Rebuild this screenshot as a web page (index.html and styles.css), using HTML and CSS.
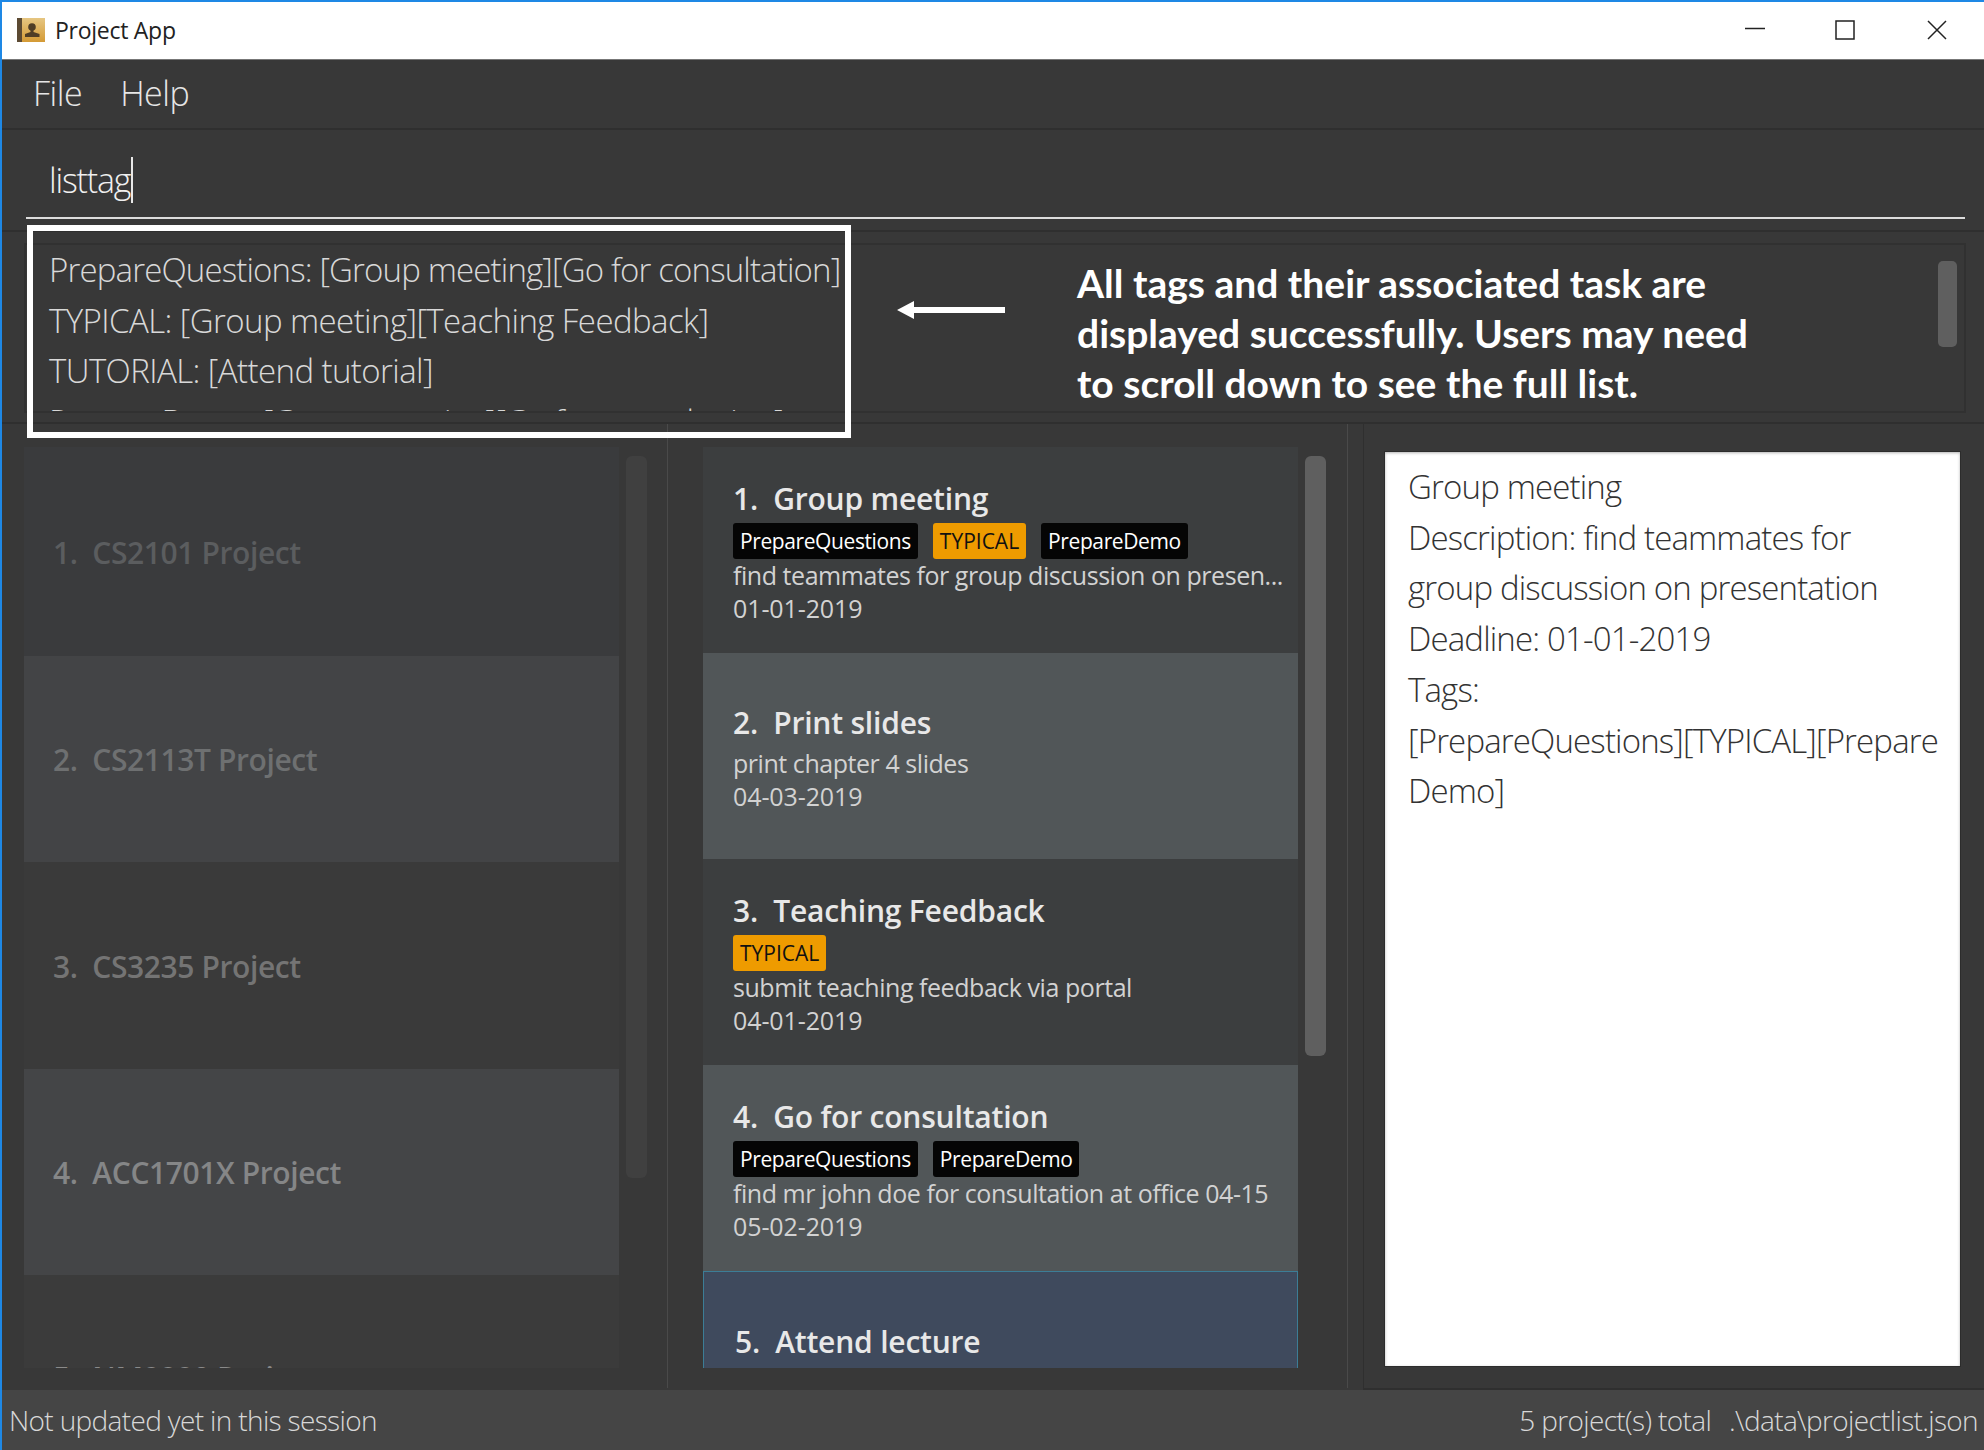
FILE: index.html
```html
<!DOCTYPE html>
<html lang="en">

<head>
    <meta charset="UTF-8">
    <meta name="viewport" content="width=device-width, initial-scale=1.0">
    <title>Project App</title>
    <link rel="stylesheet" href="styles.css">
</head>

<body>
    <div class="window">
        <div class="titlebar">
            <svg class="app-icon" width="28" height="24" viewBox="0 0 28 24">
                <defs>
                    <linearGradient id="cover" x1="0" y1="0" x2="0" y2="1">
                        <stop offset="0" stop-color="#e6c682" />
                        <stop offset="1" stop-color="#d49a35" />
                    </linearGradient>
                </defs>
                <rect width="28" height="24" fill="url(#cover)" />
                <rect width="5" height="24" fill="#5c4a33" />
                <circle cx="15" cy="9" r="3.8" fill="#4f3d26" />
                <path d="M13.5 11h3v3l6 2v3H8v-3l5.500-2z" fill="#4f3d26" />
            </svg>
            <span class="app-title">Project App</span>
            <div class="window-controls">
                <svg width="20" height="20" viewBox="0 0 20 20">
                    <path d="M0 8.500h20" stroke="#222" stroke-width="1.500" />
                </svg>
                <svg class="maximize" width="20" height="20" viewBox="0 0 20 20">
                    <rect x="1" y="1" width="18" height="18" fill="none" stroke="#222" stroke-width="1.500" />
                </svg>
                <svg width="20" height="20" viewBox="0 0 20 20">
                    <path d="M1 1l18 18M19 1L1 19" stroke="#222" stroke-width="1.500" />
                </svg>
            </div>
        </div>

        <div class="menubar">
            <span>File</span>
            <span>Help</span>
        </div>

        <div class="command-bar">
            <div class="command-input"><span class="command-text">listtag</span></div>
        </div>

        <div class="result-bar">
            <div class="result-box">
                <div class="result-text">
                    <div class="result-long">PrepareQuestions: [Group meeting][Go for consultation]</div>
                    <div>TYPICAL: [Group meeting][Teaching Feedback]</div>
                    <div>TUTORIAL: [Attend tutorial]</div>
                    <div class="result-long">PrepareDemo: [Group meeting][Go for consultation]</div>
                </div>
                <div class="result-thumb"></div>
            </div>
        </div>

        <div class="main">
            <div class="column project-column">
                <div class="list">
                    <div class="project-card fade-1">1.&nbsp; CS2101 Project</div>
                    <div class="project-card fade-2">2.&nbsp; CS2113T Project</div>
                    <div class="project-card fade-3">3.&nbsp; CS3235 Project</div>
                    <div class="project-card fade-4">4.&nbsp; ACC1701X Project</div>
                    <div class="project-card fade-5">5.&nbsp; NM2220 Project</div>
                </div>
                <div class="scrollbar faded"></div>
            </div>

            <div class="column task-column">
                <div class="list">
                    <div class="task-card">
                        <div class="task-name">1.&nbsp; Group meeting</div>
                        <div class="tags">
                            <span class="tag">PrepareQuestions</span>
                            <span class="tag typical">TYPICAL</span>
                            <span class="tag">PrepareDemo</span>
                        </div>
                        <div class="task-line">find teammates for group discussion on presen...</div>
                        <div class="task-line task-date">01-01-2019</div>
                    </div>
                    <div class="task-card alt">
                        <div class="task-name">2.&nbsp; Print slides</div>
                        <div class="task-line">print chapter 4 slides</div>
                        <div class="task-line task-date">04-03-2019</div>
                    </div>
                    <div class="task-card">
                        <div class="task-name">3.&nbsp; Teaching Feedback</div>
                        <div class="tags">
                            <span class="tag typical">TYPICAL</span>
                        </div>
                        <div class="task-line">submit teaching feedback via portal</div>
                        <div class="task-line task-date">04-01-2019</div>
                    </div>
                    <div class="task-card alt">
                        <div class="task-name">4.&nbsp; Go for consultation</div>
                        <div class="tags">
                            <span class="tag">PrepareQuestions</span>
                            <span class="tag">PrepareDemo</span>
                        </div>
                        <div class="task-line">find mr john doe for consultation at office 04-15</div>
                        <div class="task-line task-date">05-02-2019</div>
                    </div>
                    <div class="task-card selected">
                        <div class="task-name">5.&nbsp; Attend lecture</div>
                    </div>
                </div>
                <div class="scrollbar"></div>
            </div>

            <div class="detail-column">
                <div class="detail-panel">
                    <div>Group meeting</div>
                    <div>Description: find teammates for</div>
                    <div>group discussion on presentation</div>
                    <div>Deadline: 01-01-2019</div>
                    <div>Tags:</div>
                    <div>[PrepareQuestions][TYPICAL][Prepare</div>
                    <div>Demo]</div>
                </div>
            </div>
        </div>

        <div class="statusbar">
            <span class="status-left">Not updated yet in this session</span>
            <span class="status-count">5 project(s) total</span>
            <span class="status-path">.\data\projectlist.json</span>
        </div>

        <!-- annotation drawn over the screenshot -->
        <div class="callout-box"></div>
        <svg class="callout-arrow" width="108" height="18" viewBox="0 0 108 18">
            <path d="M0 9L17 0v6h91v6H17v6z" fill="#fff" />
        </svg>
        <div class="callout-text">
            <div>All tags and their associated task are</div>
            <div>displayed successfully. Users may need</div>
            <div>to scroll down to see the full list.</div>
        </div>
    </div>
</body>

</html>
```

FILE: styles.css
```css
* {
    box-sizing: border-box;
}

body {
    margin: 0;
    padding: 0;
    overflow: hidden;
    font-family: "Open Sans", "Noto Sans", sans-serif;
    color: #dcdcdc;
    background-color: #383838;
}

.window {
    position: relative;
    display: flex;
    flex-direction: column;
    width: 1984px;
    height: 1450px;
    border-top: 2px solid #1e88e5;
    border-left: 2px solid #1e88e5;
    background-color: #383838;
}

/* title bar */
.titlebar {
    display: flex;
    align-items: center;
    flex: none;
    height: 58px;
    padding: 0 0 2px 15px;
    background-color: #fff;
    border-bottom: 1px solid #777;
    color: #222;
}

.app-icon {
    margin-right: 10px;
}

.app-title {
    font-size: 23px;
    letter-spacing: -0.27px;
}

.window-controls {
    display: flex;
    gap: 70px;
    margin-left: auto;
    margin-right: 37px;
}

.maximize {
    margin-right: 2px;
}

/* menu */
.menubar {
    display: flex;
    align-items: center;
    gap: 38px;
    flex: none;
    height: 70px;
    padding: 0 0 2px 31px;
    border-bottom: 2px solid #2f2f2f;
    font-size: 34px;
    font-weight: 300;
    color: #e6e6e6;
    letter-spacing: -0.5px;
}

/* command box */
.command-bar {
    flex: none;
    height: 102px;
    padding: 25px 19px 0 24px;
    border-bottom: 2px solid #2f2f2f;
}

.command-input {
    height: 64px;
    padding-left: 23px;
    border-bottom: 2px solid #dcdcdc;
    font-size: 34px;
    font-weight: 300;
    line-height: 50px;
    color: #f0f0f0;
}

.command-text {
    padding-right: 1px;
    border-right: 2px solid #e8e8e8;
    letter-spacing: -1.2px;
}

/* result display */
.result-bar {
    flex: none;
    height: 192px;
    padding: 11px 18px 11px 22px;
    border-bottom: 2px solid #2f2f2f;
}

.result-box {
    display: flex;
    justify-content: space-between;
    height: 170px;
    padding-left: 23px;
    border: 2px solid #313131;
    overflow: hidden;
}

.result-text {
    font-size: 33px;
    font-weight: 300;
    line-height: 50.5px;
    white-space: nowrap;
    letter-spacing: -0.58px;
    color: #d8d8d8;
}

.result-long {
    letter-spacing: -0.85px;
}

.result-thumb {
    width: 19px;
    height: 86px;
    margin: 16px 7px 0 0;
    border-radius: 5px;
    background-color: #5f5f5f;
}

/* lower columns */
.main {
    display: flex;
    flex: 1;
    min-height: 0;
}

.column {
    display: flex;
    gap: 7px;
    flex: none;
    padding: 23px 0 0;
    border-right: 1px solid #4a4a4a;
    margin-bottom: 2px;
}

.project-column {
    width: 666px;
    padding-left: 22px;
}

.task-column {
    width: 680px;
    padding-left: 35px;
}

.list {
    width: 595px;
    height: 921px;
    overflow: hidden;
}

.scrollbar {
    width: 21px;
    height: 600px;
    margin-top: 9px;
    border-radius: 6px;
    background-color: #5f5f5f;
}

.scrollbar.faded {
    height: 722px;
    background-color: #404040;
}

.project-card {
    display: flex;
    align-items: center;
    height: 206.5px;
    padding: 2px 0 0 29px;
    font-size: 30px;
    font-weight: 600;
    letter-spacing: -0.4px;
}

.fade-1 {
    height: 208.5px;
    background-color: #3a3b3d;
    color: #5b5d5f;
}

.fade-2 {
    background-color: #434446;
    color: #6e7071;
}

.fade-3 {
    background-color: #3a3a3a;
    color: #747474;
}

.fade-4 {
    background-color: #444547;
    color: #858687;
}

.fade-5 {
    padding: 0 0 1px 29px;
    background-color: #3b3b3b;
    color: #8a8a8a;
}

/* task cards */
.task-card {
    display: flex;
    flex-direction: column;
    justify-content: center;
    height: 206px;
    padding-left: 30px;
    background-color: #3c3e3f;
}

.task-card.alt {
    background-color: #515658;
}

.task-card.selected {
    justify-content: flex-start;
    padding: 46px 0 0 31px;
    border: 1px solid #3c7d96;
    border-bottom: none;
    background-color: #3f4a5d;
}

.task-name {
    font-size: 30px;
    font-weight: 600;
    line-height: 48px;
    letter-spacing: -0.2px;
    color: #e8e8e8;
}

.tags {
    display: flex;
    gap: 15px;
    height: 36px;
}

.tag {
    padding: 0 7px;
    border-radius: 3px;
    background-color: #050505;
    color: #fff;
    font-size: 21px;
    line-height: 36px;
    letter-spacing: -0.4px;
}

.tag.typical {
    background-color: #ee9b00;
    color: #111;
    letter-spacing: 0;
}

.task-line {
    font-size: 25px;
    line-height: 33.5px;
    letter-spacing: -0.45px;
    white-space: nowrap;
    color: #d2d2d2;
}

.task-date {
    letter-spacing: -0.1px;
}

/* detail panel */
.detail-column {
    flex: 1;
    margin-left: 15px;
    padding: 27px 23px 21px 20px;
    border-left: 1px solid #2f2f2f;
    border-bottom: 2px solid #2f2f2f;
}

.detail-panel {
    height: 100%;
    padding: 10px 0 0 23px;
    background-color: #fff;
    border: 1px solid #2c2c2c;
    box-shadow: inset 0 1px 3px rgba(0, 0, 0, 0.3);
    color: #333;
    font-size: 33px;
    font-weight: 300;
    line-height: 50.7px;
    letter-spacing: -0.85px;
    white-space: nowrap;
}

/* status bar */
.statusbar {
    display: flex;
    align-items: center;
    flex: none;
    height: 60px;
    padding: 0 6px 0 7px;
    background-color: #454545;
    font-size: 28px;
    font-weight: 300;
    color: #d8d8d8;
    letter-spacing: -0.65px;
}

.status-count {
    margin-left: auto;
    margin-right: 18px;
}

/* annotation */
.callout-box {
    position: absolute;
    left: 25px;
    top: 223px;
    width: 824px;
    height: 213px;
    border: 6px solid #fff;
}

.callout-arrow {
    position: absolute;
    left: 895px;
    top: 299px;
}

.callout-text {
    position: absolute;
    left: 1075px;
    top: 256px;
    font-family: "Lato", "Open Sans", sans-serif;
    font-size: 39px;
    font-weight: 700;
    line-height: 50px;
    color: #fff;
    white-space: nowrap;
}
```
